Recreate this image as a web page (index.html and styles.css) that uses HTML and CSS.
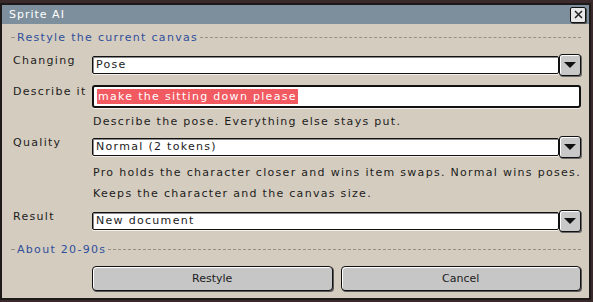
FILE: index.html
```html
<!DOCTYPE html>
<html lang="en">
<head>
    <meta charset="UTF-8">
    <title>Sprite AI</title>
    <link rel="stylesheet" href="styles.css">
</head>
<body>
    <div class="window">
        <div class="titlebar">
            <span>Sprite AI</span>
            <button class="close">
                <svg width="9" height="9" viewBox="0 0 9 9"><path d="M1 1L8 8M8 1L1 8" stroke="#222" stroke-width="1.5"/></svg>
            </button>
        </div>
        <div class="content">
            <div class="separator">Restyle the current canvas</div>
            <div class="form">
                <label class="label">Changing</label>
                <div class="combo">
                    <div class="field">Pose</div>
                    <div class="arrow"></div>
                </div>

                <label class="label gap-9">Describe it</label>
                <div class="entry gap-9"><span class="selected">make the sitting down please</span></div>

                <div></div>
                <div class="hint">Describe the pose. Everything else stays put.</div>

                <label class="label gap-7">Quality</label>
                <div class="combo gap-7">
                    <div class="field">Normal (2 tokens)</div>
                    <div class="arrow"></div>
                </div>

                <div></div>
                <div class="hint wide">Pro holds the character closer and wins item swaps. Normal wins poses.<br>Keeps the character and the canvas size.</div>

                <label class="label gap-6">Result</label>
                <div class="combo gap-6">
                    <div class="field">New document</div>
                    <div class="arrow"></div>
                </div>
            </div>
            <div class="separator">About 20-90s</div>
            <div class="buttons">
                <button class="btn">Restyle</button>
                <button class="btn">Cancel</button>
            </div>
        </div>
    </div>
</body>
</html>
```

FILE: styles.css
```css
body {
    margin: 0;
    background: #3a2a2c;
    font-family: "DejaVu Sans", sans-serif;
    font-size: 11px;
    letter-spacing: 1.3px;
    color: #1c1c1c;
}
.window {
    margin-top: 3px;
    width: 587px;
    border: 2px solid #1e1a1a;
    background: #d4ccbf;
}
.titlebar {
    display: flex;
    align-items: center;
    justify-content: space-between;
    height: 19px;
    padding: 0 3px 0 7px;
    background: #7d8f9c;
    color: #fff;
    letter-spacing: 1px;
}
.close {
    width: 16px;
    height: 16px;
    padding: 0;
    display: flex;
    align-items: center;
    justify-content: center;
    background: #e8e8e8;
    border: 1px solid #111;
    border-radius: 2px;
    box-shadow: 1px 1px 0 #4a4a4a;
}
.content {
    padding: 6px 8px 7px 9px;
}
.separator {
    display: flex;
    align-items: center;
    gap: 2px;
    color: #2f4f9c;
    height: 14px;
}
.separator::before {
    content: "";
    width: 4px;
    border-top: 1px solid #9a8f84;
}
.separator::after {
    content: "";
    flex: 1;
    border-top: 1px dashed #9a8f84;
}
.form {
    display: grid;
    grid-template-columns: 81px 1fr;
    align-items: start;
    margin: 10px 0 10px;
}
.gap-9 { margin-top: 9px; }
.gap-7 { margin-top: 7px; }
.gap-6 { margin-top: 6px; }
.label {
    padding-left: 2px;
    line-height: 14px;
}
.combo {
    display: flex;
    align-items: center;
}
.field {
    flex: 1;
    height: 16px;
    line-height: 16px;
    padding-left: 3px;
    background: #fff;
    border: 1px solid #111;
    border-radius: 2px;
    box-shadow: inset 1px 1px 0 #888, 0 1px 0 #f4f0ea;
}
.arrow {
    position: relative;
    width: 20px;
    height: 20px;
    background: #c8c8c8;
    border: 1px solid #111;
    border-radius: 3px;
    box-shadow: inset 1px 1px 0 #fff, 1px 1px 0 #6a6a6a;
}
.arrow::after {
    content: "";
    position: absolute;
    left: 4px;
    top: 7px;
    border-left: 6px solid transparent;
    border-right: 6px solid transparent;
    border-top: 6px solid #111;
}
.entry {
    height: 15px;
    padding: 2px 3px;
    background: #fff;
    border: 2px solid #111;
    border-radius: 3px;
    box-shadow: inset 0 0 0 1px #fff, 0 1px 0 #f4f0ea;
}
.selected {
    display: inline-block;
    height: 15px;
    line-height: 15px;
    padding: 0 1px;
    background: #f25a62;
    color: #fff;
}
.hint {
    line-height: 14px;
    margin-top: 7px;
    padding-left: 1px;
}
.hint.wide {
    line-height: 21px;
    margin-top: 4px;
}
.buttons {
    display: grid;
    grid-template-columns: 1fr 1fr;
    gap: 8px;
    margin: 10px 0 0 81px;
}
.btn {
    height: 25px;
    font: inherit;
    color: #1c1c1c;
    background: #c6c6c6;
    border: 1px solid #111;
    border-radius: 4px;
    box-shadow: inset 1px 1px 0 #fff, 1px 1px 0 #5a5a5a;
}
```
